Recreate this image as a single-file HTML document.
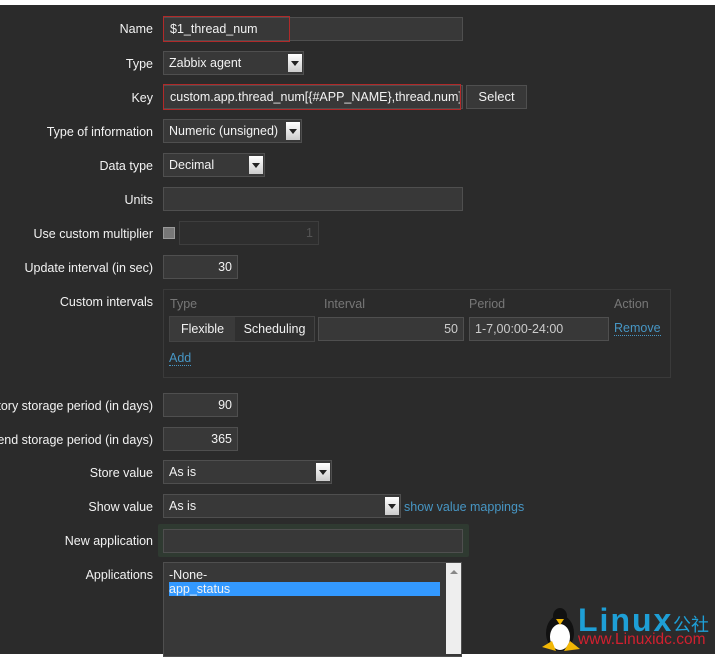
<!DOCTYPE html>
<html><head><meta charset="utf-8"><style>
*{box-sizing:border-box;margin:0;padding:0}
body{width:717px;height:654px;background:#fff;position:relative;overflow:hidden;font-family:"Liberation Sans",Arial,sans-serif;font-size:12.5px;color:#f2f2f2}
#p{position:absolute;left:0;top:5px;width:715px;height:649px;background:#2b2b2b}
.a{position:absolute}
.l{position:absolute;right:564px;text-align:right;white-space:nowrap;color:#f2f2f2}
.i{position:absolute;background:#383838;border:1px solid #4f4f4f;height:24px;line-height:22px;padding:0 5px;white-space:nowrap;overflow:hidden}
.r{text-align:right}
.s .b{position:absolute;right:1px;top:2px;width:14px;height:18px;background:linear-gradient(#fff,#ccc);}
.s .b:after{content:"";position:absolute;left:3px;top:7px;border-left:4px solid transparent;border-right:4px solid transparent;border-top:5px solid #222}
.h{color:#777;position:absolute;top:297px}
.lnk{color:#4796c4;border-bottom:1px dotted #4796c4;position:absolute}
</style></head><body>
<div id="p"></div>
<div class="l" style="top:22px">Name</div>
<div class="i" style="left:163px;top:17px;width:300px"></div>
<div class="a" style="left:163px;top:16px;width:127px;height:26px;border:1px solid #b02a2a;padding-left:6px;line-height:24px">$1_thread_num</div>
<div class="l" style="top:57px">Type</div>
<div class="i s" style="left:163px;top:51px;width:141px">Zabbix agent<div class="b"></div></div>
<div class="l" style="top:91px">Key</div>
<div class="i" style="left:163px;top:85px;width:300px"></div>
<div class="a" style="left:163px;top:84px;width:298px;height:26px;border:1px solid #b02a2a;padding-left:6px;line-height:24px;white-space:nowrap;overflow:hidden">custom.app.thread_num[{#APP_NAME},thread.num]</div>
<div class="i" style="left:466px;top:85px;width:61px;text-align:center;font-size:13px">Select</div>
<div class="l" style="top:125px">Type of information</div>
<div class="i s" style="left:163px;top:119px;width:139px">Numeric (unsigned)<div class="b"></div></div>
<div class="l" style="top:159px">Data type</div>
<div class="i s" style="left:163px;top:153px;width:102px">Decimal<div class="b"></div></div>
<div class="l" style="top:193px">Units</div>
<div class="i" style="left:163px;top:187px;width:300px"></div>
<div class="l" style="top:227px">Use custom multiplier</div>
<div class="a" style="left:163px;top:227px;width:12px;height:12px;background:#777;border:1px solid #999"></div>
<div class="i r" style="left:179px;top:221px;width:140px;background:#2e2e2e;border-color:#3e3e3e;color:#555">1</div>
<div class="l" style="top:261px">Update interval (in sec)</div>
<div class="i r" style="left:163px;top:255px;width:75px">30</div>
<div class="l" style="top:295px">Custom intervals</div>
<div class="a" style="left:163px;top:289px;width:508px;height:89px;border:1px solid #3a3a3a;background:#2b2b2b"></div>
<div class="h" style="left:170px">Type</div><div class="h" style="left:324px">Interval</div><div class="h" style="left:469px">Period</div><div class="h" style="left:614px">Action</div>
<div class="a" style="left:169px;top:316px;width:146px;height:26px;border:1px solid #444;background:#2f2f2f"></div>
<div class="a" style="left:170px;top:317px;width:65px;height:24px;background:#3a3a3a;text-align:center;line-height:24px">Flexible</div>
<div class="a" style="left:235px;top:317px;width:79px;height:24px;text-align:center;line-height:24px">Scheduling</div>
<div class="i r" style="left:318px;top:317px;width:146px;color:#ccc">50</div>
<div class="i" style="left:469px;top:317px;width:140px;color:#ccc">1-7,00:00-24:00</div>
<div class="lnk" style="left:614px;top:321px">Remove</div>
<div class="lnk" style="left:169px;top:351px">Add</div>
<div class="l" style="top:399px">History storage period (in days)</div>
<div class="i r" style="left:163px;top:393px;width:75px">90</div>
<div class="l" style="top:433px">Trend storage period (in days)</div>
<div class="i r" style="left:163px;top:427px;width:75px">365</div>
<div class="l" style="top:466px">Store value</div>
<div class="i s" style="left:163px;top:460px;width:169px">As is<div class="b"></div></div>
<div class="l" style="top:500px">Show value</div>
<div class="i s" style="left:163px;top:494px;width:238px">As is<div class="b"></div></div>
<div class="a" style="left:404px;top:500px;color:#4796c4">show value mappings</div>
<div class="l" style="top:534px">New application</div>
<div class="a" style="left:158px;top:524px;width:311px;height:33px;background:#2f3a31;border-radius:2px"></div>
<div class="i" style="left:163px;top:529px;width:300px"></div>
<div class="l" style="top:568px">Applications</div>
<div class="a" style="left:163px;top:562px;width:299px;height:95px;background:#383838;border:1px solid #4f4f4f"></div>
<div class="a" style="left:169px;top:568px">-None-</div>
<div class="a" style="left:169px;top:582px;width:271px;height:14px;background:#3399ff;line-height:14px">app_status</div>
<div class="a" style="left:446px;top:563px;width:15px;height:91px;background:#eee"></div>
<div class="a" style="left:450px;top:570px;border-left:4px solid transparent;border-right:4px solid transparent;border-bottom:4px solid #888"></div>
<svg class="a" style="left:540px;top:605px" width="42" height="48" viewBox="0 0 42 48">
<ellipse cx="20" cy="28" rx="14" ry="18" fill="#111"/>
<ellipse cx="20" cy="32" rx="10" ry="13" fill="#fff"/>
<ellipse cx="20" cy="11" rx="7" ry="8" fill="#111"/>
<path d="M16 14 L24 14 L20 20Z" fill="#f2b705"/>
<path d="M2 42 L12 36 L16 46 Z M24 46 L30 36 L40 44 Z" fill="#f2b705"/>
</svg>
<div class="a" style="left:578px;top:604px;font-size:32px;font-weight:bold;color:#1e9fd6;line-height:32px;letter-spacing:2px">Linux</div>
<div class="a" style="left:673px;top:613px;font-size:18px;color:#1e9fd6;font-family:'Noto Sans CJK SC',sans-serif;line-height:22px">公社</div>
<div class="a" style="left:578px;top:632px;font-size:15.5px;color:#d2202f;line-height:16px">www.Linuxidc.com</div>
</body></html>
